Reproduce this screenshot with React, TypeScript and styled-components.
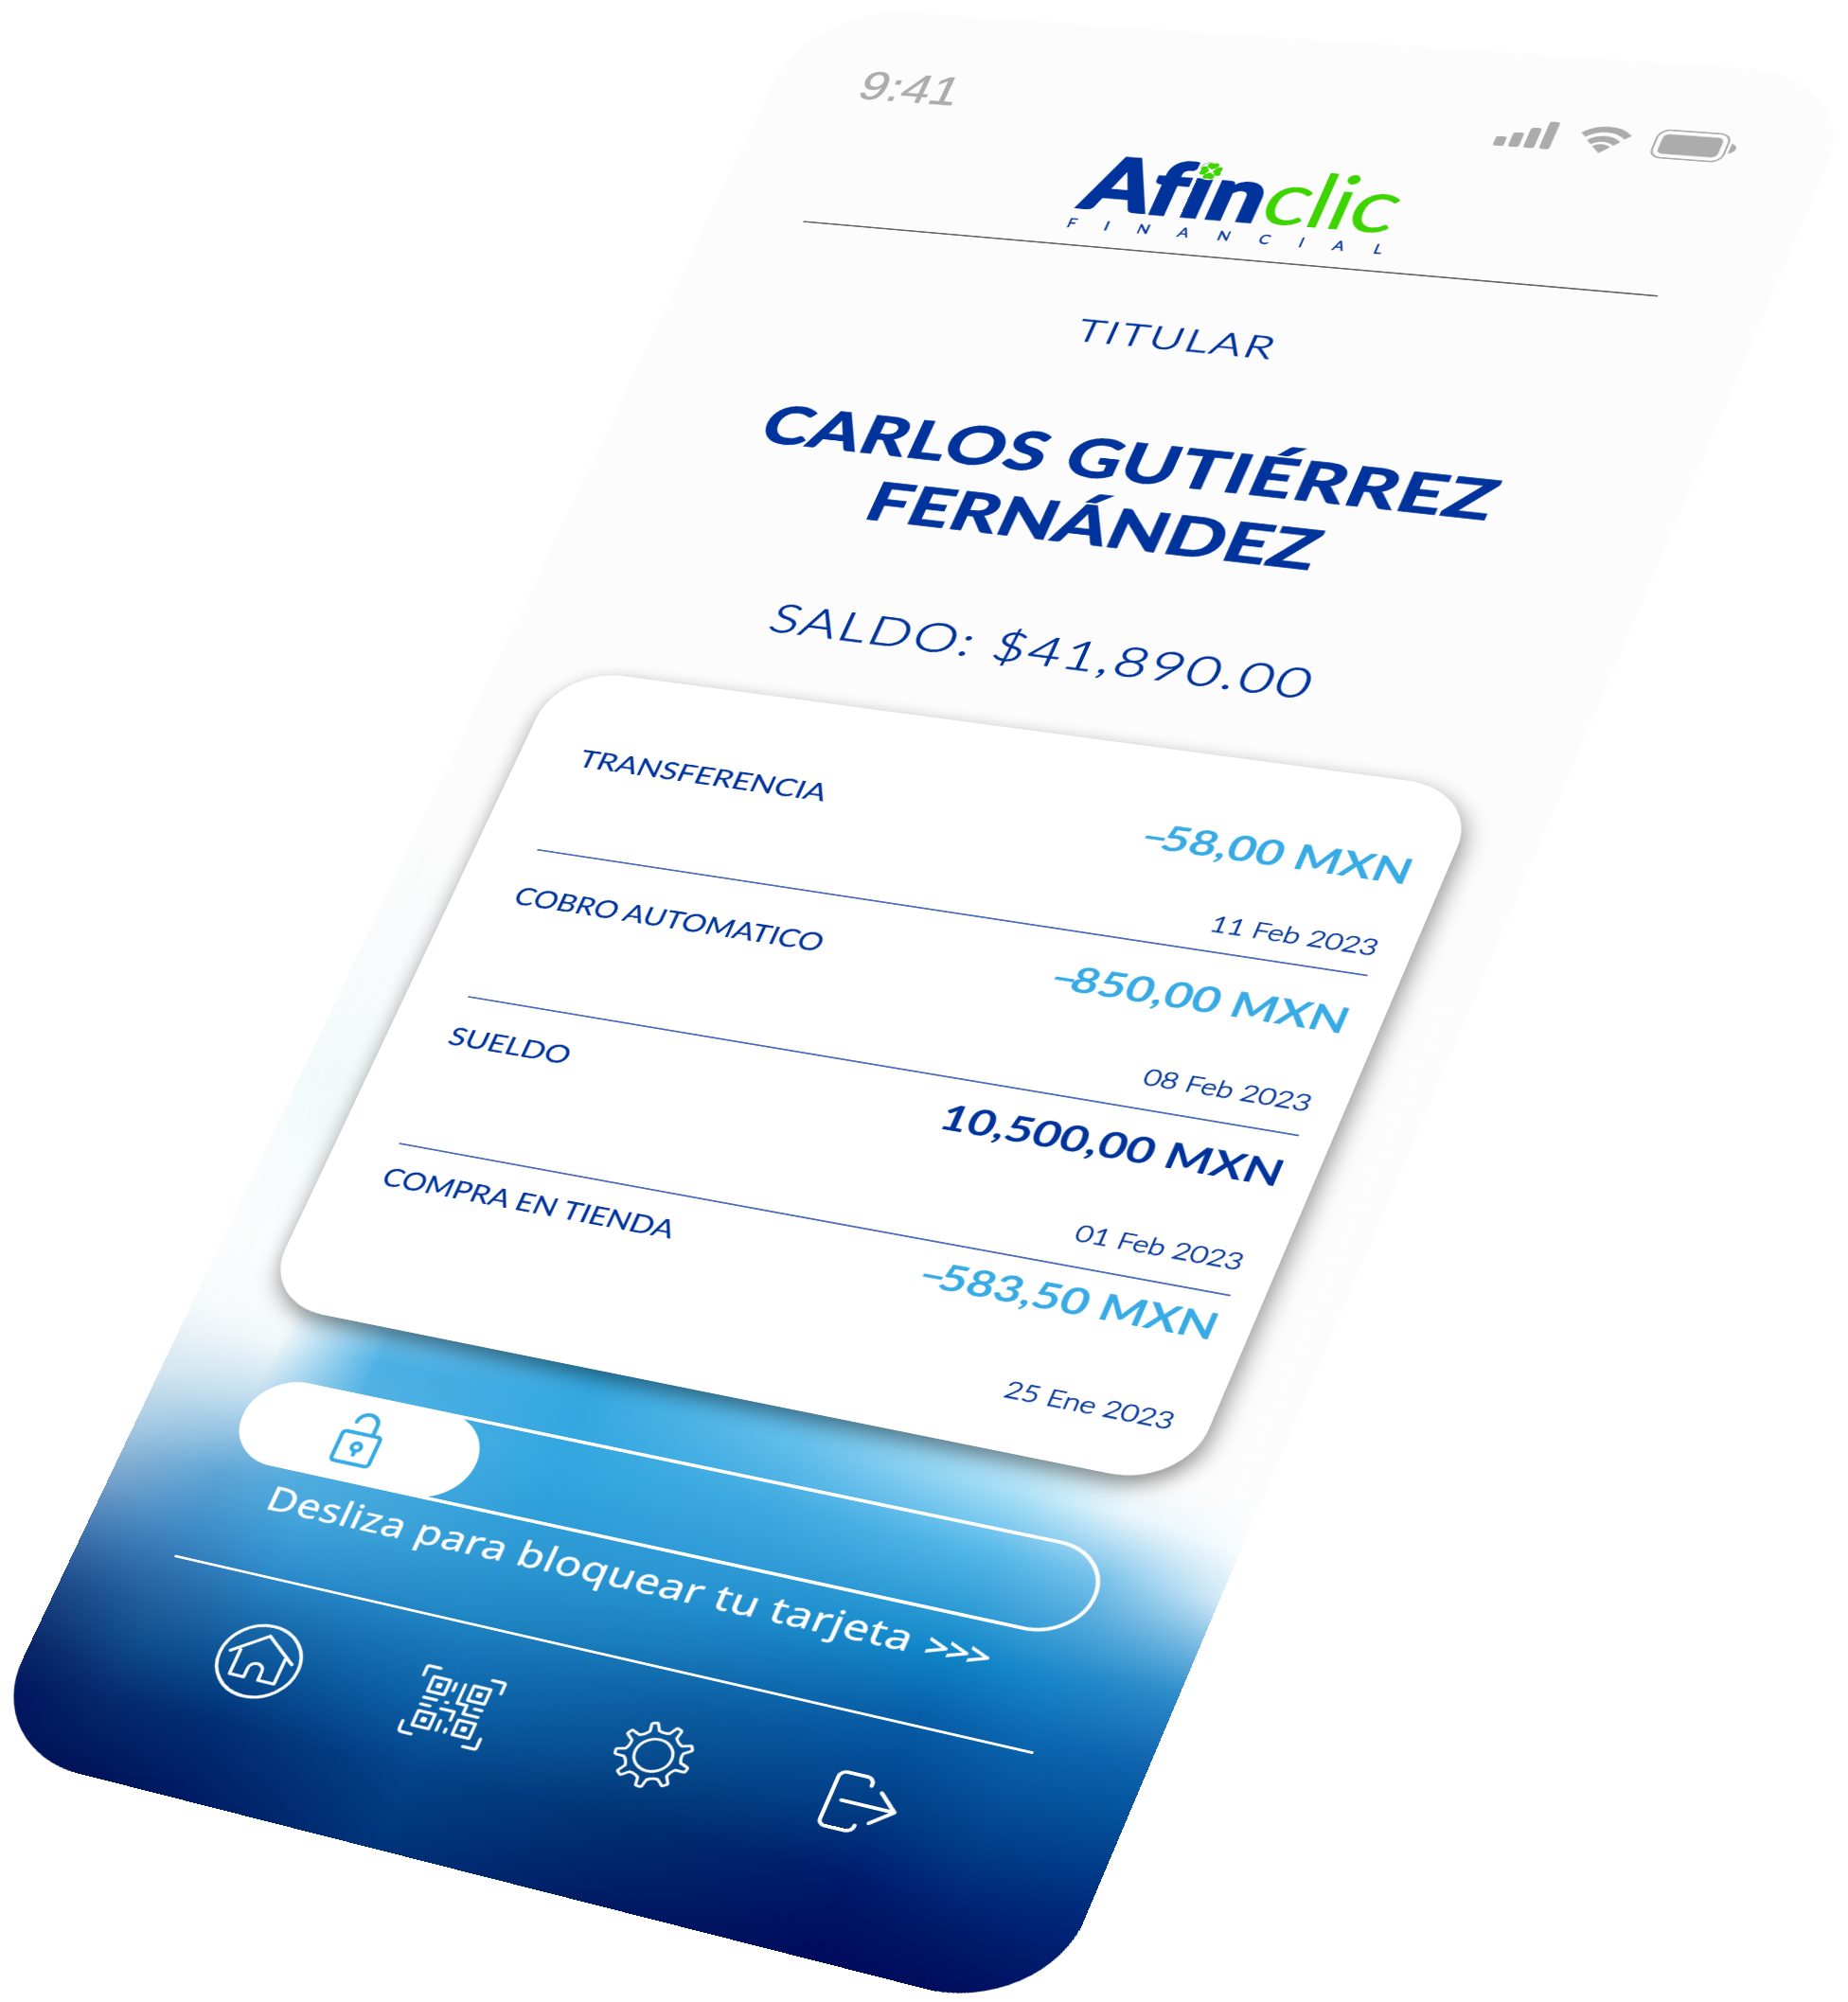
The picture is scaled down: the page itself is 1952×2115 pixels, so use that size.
import React from 'react';
import styled, { createGlobalStyle } from 'styled-components';

const GlobalStyle = createGlobalStyle`
  html, body { margin: 0; padding: 0; background: #ffffff; }
  *, *::before, *::after { box-sizing: border-box; }
`;

/* ---------- perspective ---------- */

const SCREEN_W = 1125;
const SCREEN_H = 2436;

type Point = [number, number];

/** Builds the matrix3d that carries a w x h box onto four corners (TL, TR, BR, BL). */
function quadTransform(w: number, h: number, [p0, p1, p2, p3]: Point[]): string {
  const dx1 = p1[0] - p2[0];
  const dy1 = p1[1] - p2[1];
  const dx2 = p3[0] - p2[0];
  const dy2 = p3[1] - p2[1];
  const sx = p0[0] - p1[0] + p2[0] - p3[0];
  const sy = p0[1] - p1[1] + p2[1] - p3[1];
  const det = dx1 * dy2 - dx2 * dy1;
  const g = (sx * dy2 - dx2 * sy) / det;
  const k = (dx1 * sy - sx * dy1) / det;
  const a = p1[0] - p0[0] + g * p1[0];
  const b = p3[0] - p0[0] + k * p3[0];
  const d = p1[1] - p0[1] + g * p1[1];
  const e = p3[1] - p0[1] + k * p3[1];
  const m = [a / w, d / w, 0, g / w, b / h, e / h, 0, k / h, 0, 0, 1, 0, p0[0], p0[1], 0, 1];
  return `matrix3d(${m.map((n) => n.toFixed(10)).join(',')})`;
}

const tilt = quadTransform(SCREEN_W, SCREEN_H, [
  [854.6, 6.6],
  [1969.5, 80.7],
  [1101.2, 2132.6],
  [-21, 1847.2],
]);

/* ---------- colours ---------- */

const navy = '#00349c';
const sky = '#38abe5';
const lime = '#3dd400';
const grey = '#acacac';
const sans = "Lato, 'Noto Sans', sans-serif";

/* ---------- shell ---------- */

const Stage = styled.main`
  display: flex;
  align-items: flex-start;
  width: 1952px;
  height: 2115px;
  overflow: hidden;
  background: #ffffff;
`;

const Phone = styled.section`
  display: grid;
  flex: none;
  width: ${SCREEN_W}px;
  height: ${SCREEN_H}px;
  border-radius: 115px;
  overflow: hidden;
  background: #fcfcfc;
  transform-origin: 0 0;
  transform: ${tilt};
  font-family: ${sans};
  color: ${navy};
`;

const Backdrop = styled.div`
  grid-area: 1 / 1;
  display: grid;
  clip-path: inset(50% 0 0 0);
`;

const Wash = styled.div<{ $from: number; $to: number; $stops: string }>`
  grid-area: 1 / 1;
  background: linear-gradient(to bottom, ${(p) => p.$stops});
  mask-image: ${(p) =>
    p.$to === 0
      ? 'none'
      : `linear-gradient(to right, transparent ${p.$from}%, #000 ${p.$to}%)`};
`;

const Content = styled.div`
  grid-area: 1 / 1;
  display: flex;
  flex-direction: column;
  position: relative;
  padding-top: 79px;
`;

/* ---------- header ---------- */

const StatusBar = styled.div`
  display: flex;
  align-items: center;
  justify-content: space-between;
  height: 60px;
  padding: 0 92px 0 101px;
  color: ${grey};
`;

const Clock = styled.span`
  font-family: 'Liberation Sans', Arial, sans-serif;
  font-size: 57px;
  line-height: 60px;
  letter-spacing: 0.3px;
  -webkit-text-stroke: 0.7px ${grey};
`;

const StatusIcons = styled.div`
  display: flex;
  align-items: center;
  gap: 24px;
  svg { display: block; }
`;

const Brand = styled.div`
  display: flex;
  flex-direction: column;
  align-items: center;
  margin-top: 30px;
`;

const Wordmark = styled.div`
  position: relative;
  font-size: 102px;
  line-height: 101px;
  font-feature-settings: 'liga' 0;
  white-space: nowrap;
`;

const BrandStrong = styled.span`
  font-weight: 900;
  letter-spacing: 0.5px;
  color: ${navy};
  -webkit-text-stroke: 3px ${navy};
`;

const BrandLight = styled.span`
  font-weight: 400;
  letter-spacing: -2px;
  color: ${lime};
`;

const Clover = styled.svg`
  position: absolute;
  left: 110px;
  top: 11px;
`;

const Tagline = styled.div`
  margin: 2px -31px 0 0;
  font-size: 17px;
  line-height: 17px;
  letter-spacing: 31px;
  -webkit-text-stroke: 0.4px ${navy};
`;

const Rule = styled.hr<{ $tone: string; $weight: number; $gap: number }>`
  width: 910px;
  height: ${(p) => p.$weight}px;
  margin: ${(p) => p.$gap}px auto 0;
  border: 0;
  flex: none;
  background: ${(p) => p.$tone};
`;

/* ---------- holder ---------- */

const Caption = styled.div`
  margin-top: 93px;
  font-size: 42px;
  line-height: 41px;
  font-weight: 300;
  letter-spacing: 2.8px;
  text-align: center;
  transform: scaleX(1.15);
  -webkit-text-stroke: 1.1px ${navy};
`;

const Holder = styled.h1`
  display: flex;
  flex-direction: column;
  align-items: center;
  margin: 104px 6px 0 0;
  font-size: 72px;
  line-height: 88.5px;
  font-weight: 700;
  transform: scaleX(1.1);
  -webkit-text-stroke: 1.6px ${navy};
`;

const HolderLine = styled.span<{ $tracking: number }>`
  letter-spacing: ${(p) => p.$tracking}px;
`;

const Balance = styled.div`
  margin-top: 101px;
  font-size: 53px;
  line-height: 53px;
  font-weight: 300;
  letter-spacing: 2.7px;
  text-align: center;
  transform: scaleX(1.12);
  -webkit-text-stroke: 1px ${navy};
`;

/* ---------- movements ---------- */

const Card = styled.ul`
  list-style: none;
  flex: none;
  width: 979px;
  height: 872px;
  margin: 79px 0 0 72px;
  padding: 88px 32px 0 68px;
  border-radius: 72px;
  background: #ffffff;
  box-shadow: 4px 9px 24px rgba(0, 0, 0, 0.45);
`;

const Movement = styled.li<{ $above: number }>`
  display: flex;
  flex-direction: column;
  padding-top: ${(p) => p.$above}px;
`;

const MovementHead = styled.div`
  display: flex;
  align-items: baseline;
  justify-content: space-between;
  height: 44px;
`;

const Label = styled.span<{ $stretch: number }>`
  font-size: 32px;
  line-height: 32px;
  transform: scaleX(${(p) => p.$stretch});
  transform-origin: left;
  -webkit-text-stroke: 0.2px ${navy};
`;

const Amount = styled.span<{ $credit: boolean }>`
  font-size: 44px;
  line-height: 44px;
  font-weight: 700;
  color: ${(p) => (p.$credit ? navy : sky)};
  transform: scaleX(1.09);
  transform-origin: right;
`;

const Minus = styled.span`
  margin-right: -6px;
`;

const When = styled.time<{ $above: number }>`
  align-self: flex-end;
  margin: ${(p) => p.$above}px 2px 0 0;
  font-size: 27.5px;
  line-height: 30px;
  font-weight: 300;
  transform: scaleX(1.07);
  transform-origin: right;
  -webkit-text-stroke: 0.8px ${navy};
`;

const Divider = styled.div<{ $above: number }>`
  height: 2px;
  margin-top: ${(p) => p.$above}px;
  background: #4a6cbc;
`;

/* ---------- lock slider ---------- */

const Track = styled.div`
  flex: none;
  width: 905px;
  height: 108px;
  margin: 86px auto 0;
  border: 4px solid #ffffff;
  border-radius: 54px;
`;

const Knob = styled.div`
  display: flex;
  align-items: center;
  justify-content: center;
  width: 262px;
  height: 108px;
  margin: -4px;
  padding: 0 0 3px 4px;
  border-radius: 54px;
  background: #ffffff;
`;

const Hint = styled.div`
  display: flex;
  align-items: baseline;
  align-self: flex-start;
  margin: 16px 0 0 177px;
  font-family: 'Noto Sans', sans-serif;
  font-size: 41px;
  line-height: 41px;
  letter-spacing: 0.6px;
  white-space: pre;
  color: #ffffff;
  transform: scaleX(1.1);
  transform-origin: left;
  -webkit-text-stroke: 0.5px #ffffff;
`;

const Chevrons = styled.span`
  margin-left: 2px;
  font-size: 35px;
  letter-spacing: -1.2px;
  -webkit-text-stroke: 1.3px #ffffff;
`;

/* ---------- navigation ---------- */

const Nav = styled.nav`
  display: grid;
  grid-template-columns: repeat(4, 213.4px);
  justify-items: center;
  margin: 50px 0 0 138px;
  svg { display: block; overflow: visible; }
`;

/* ---------- icons ---------- */

const SignalIcon = () => (
  <svg width="58" height="40" viewBox="0 0 58 40" fill="currentColor">
    <rect x="0" y="26" width="11" height="13" rx="2" />
    <rect x="15.5" y="19" width="11" height="20" rx="3" />
    <rect x="31" y="11" width="11" height="28" rx="3" />
    <rect x="47" y="1" width="10.500" height="38" rx="3" />
  </svg>
);

const WifiIcon = () => (
  <svg width="51" height="40" viewBox="0 0 51 40" fill="none" stroke="currentColor" strokeWidth="8">
    <path d="M3 15.500A32 32 0 0 1 48 15.500" />
    <path d="M11.500 25A20 20 0 0 1 39.500 25" />
    <path d="M25.500 39L16.500 30A13 13 0 0 1 34.500 30Z" fill="currentColor" stroke="none" />
  </svg>
);

const BatteryIcon = () => (
  <svg width="82" height="40" viewBox="0 0 82 40" fill="currentColor">
    <rect x="1" y="1" width="71" height="38" rx="11" fill="none" stroke="currentColor" strokeWidth="2" />
    <rect x="6.500" y="6.500" width="60" height="27" rx="6" />
    <path d="M75.500 13c8 3 8 11 0 14z" />
  </svg>
);

const LockIcon = () => (
  <svg width="52" height="76" viewBox="-26 -38 52 76" fill="none" stroke={sky} strokeWidth="4.400" strokeLinecap="round" strokeLinejoin="round">
    <rect x="-21" y="-6" width="42" height="38" rx="4" />
    <path d="M11.500 -6V-19A11.500 11.500 0 0 0 -11.500 -19" />
    <circle cx="0" cy="11" r="5" />
    <path d="M0 16V21" />
  </svg>
);

const HomeIcon = () => (
  <svg width="96" height="96" viewBox="-48 -48 96 96" fill="none" stroke="#ffffff" strokeWidth="3.600">
    <circle r="44" />
    <path d="M-34 -5L0 -32L35 -5" strokeLinecap="round" />
    <path d="M-24 -10V22H-8V11A8 8 0 0 1 8 11V22H26V-10" strokeLinejoin="round" />
  </svg>
);

const finders: Point[] = [[-22, -21], [21.500, -21], [-22, 21.500], [21.500, 21.500]];

const QrIcon = () => (
  <svg width="96" height="96" viewBox="-48 -48 96 96" fill="none" stroke="#ffffff" strokeWidth="3.400" strokeLinecap="round" strokeLinejoin="round">
    <path d="M-42 -29V-39Q-42 -41 -40 -41H-28M28 -41H40Q42 -41 42 -39V-28M42 28V39Q42 41 40 41H28M-28 41H-38Q-42 41 -42 37V28" />
    {finders.map(([x, y]) => (
      <g key={`${x}:${y}`}>
        <rect x={x - 9} y={y - 9} width="18" height="18" />
        <rect x={x - 1.500} y={y - 1.500} width="3" height="3" fill="#ffffff" />
      </g>
    ))}
    <path d="M-6 -28V-19M3.500 -29V-6H14V4.500H30M23 -4H31M-32 -4H-18M-32 4.500H-22M-8 -4H-6M-10 4.500H4.500V15M-5 18V30M4 26V30" />
  </svg>
);

function gearPath(teeth: number, outer: number, root: number, start: number): string {
  const at = (r: number, deg: number) => {
    const t = ((deg - 90) * Math.PI) / 180;
    return `${(r * Math.cos(t)).toFixed(2)} ${(r * Math.sin(t)).toFixed(2)}`;
  };
  const step = 360 / teeth;
  let d = '';
  for (let i = 0; i < teeth; i += 1) {
    const c = start + i * step;
    d += `${i === 0 ? 'M' : 'L'}${at(root + 1, c - 9)}`;
    d += `L${at(outer - 1, c - 5)}Q${at(outer, c - 4.500)} ${at(outer, c - 3)}L${at(outer, c + 3)}`;
    d += `Q${at(outer, c + 4.500)} ${at(outer - 1, c + 5)}L${at(root + 1, c + 9)}`;
    d += `Q${at(root - 1.500, c + step / 2)} ${at(root + 1, c + step - 9)}`;
  }
  return `${d}Z`;
}

const GearIcon = () => (
  <svg width="96" height="96" viewBox="-49 -48 96 96" fill="none" stroke="#ffffff" strokeWidth="3" strokeLinejoin="round">
    <path d={gearPath(9, 38, 28, 22)} />
    <circle r="19" />
  </svg>
);

const ExitIcon = () => (
  <svg width="96" height="96" viewBox="-47 -48 96 96" fill="none" stroke="#ffffff" strokeWidth="4" strokeLinecap="round" strokeLinejoin="round">
    <path d="M2 -23V-25A7 7 0 0 0 -5 -32H-25A7 7 0 0 0 -32 -25V26A7 7 0 0 0 -25 32H-5A7 7 0 0 0 2 25V24" />
    <path d="M-20 0H33M14 -18L33 0L14 18" />
  </svg>
);

/* ---------- data ---------- */

const washes = [
  { from: 0, to: 0, stops: '#fcfcfc 50%, #f4fafb 63%, #fbfdfd 72%, #f6fafc 76%, #d6e7f1 79.500%, #a9cce3 82.500%, #6f9cc8 86%, #3f74ae 88.500%, #1f4c8c 91%, #0a2768 94.500%, #021560 97%, #001358 100%' },
  { from: 0, to: 10, stops: '#fcfcfc 50%, #f0f8fa 65%, #fafdfd 73%, #f2f8fa 77%, #c0ddee 80%, #5fa6d6 84%, #3f8cc8 87%, #2a6aa8 90%, #114f8f 93%, #062b6f 96%, #001358 100%' },
  { from: 10, to: 20, stops: '#fcfcfc 50%, #fcfcfc 70%, #4db0e4 77%, #58b3e4 80%, #45a8dd 85%, #2f8fce 88%, #1f75b5 90%, #0a5195 93%, #022e75 96%, #001a62 100%' },
  { from: 20, to: 40, stops: '#fcfcfc 50%, #38a8e0 72%, #33a7e0 80%, #2d98d3 85%, #2088c4 88%, #1775b8 90%, #0b5fa5 93%, #05448a 96%, #003479 100%' },
  { from: 40, to: 60, stops: '#fcfcfc 50%, #60bdea 77%, #3fa9e0 80%, #2490cf 85%, #1574b5 88%, #0d5fa3 90%, #064a8c 93%, #013072 96%, #001b64 100%' },
  { from: 60, to: 80, stops: '#fcfcfc 50%, #c4e9f8 75%, #a9dff6 77%, #55b8e9 80%, #0f85c6 85%, #085fa8 88%, #04509a 90%, #013a82 93%, #001a6c 96%, #000b5c 100%' },
  { from: 80, to: 90, stops: '#fcfcfc 50%, #fcfcfc 75%, #e8f5fb 77%, #79c2ea 80%, #1b87c9 85%, #0b68b0 88%, #02408a 93%, #001c6c 97%, #000d5c 100%' },
  { from: 90, to: 100, stops: '#fcfcfc 50%, #fcfcfc 75%, #f8fcfe 77.500%, #d0e8f6 80%, #6db3df 82.500%, #2f8cc9 84.500%, #0f62ad 88%, #035299 90.500%, #00297a 95%, #001060 100%' },
];

const movements = [
  { label: 'TRANSFERENCIA', stretch: 1.085, sign: '–', amount: '58,00 MXN', date: '11 Feb 2023', above: 0, dateGap: 60.5, lineGap: 19.5 },
  { label: 'COBRO AUTOMATICO', stretch: 1.03, sign: '–', amount: '850,00 MXN', date: '08 Feb 2023', above: 33.5, dateGap: 68.5, lineGap: 24 },
  { label: 'SUELDO', stretch: 1.08, sign: '', amount: '10,500,00 MXN', date: '01 Feb 2023', above: 23.5, dateGap: 74.5, lineGap: 24.5 },
  { label: 'COMPRA EN TIENDA', stretch: 1.04, sign: '–', amount: '583,50 MXN', date: '25 Ene 2023', above: 15.5, dateGap: 79.5, lineGap: 0 },
];

/* ---------- app ---------- */

export default function App() {
  return (
    <>
      <GlobalStyle />
      <Stage>
        <Phone>
          <Backdrop>
            {washes.map((w) => (
              <Wash key={w.from + w.to} $from={w.from} $to={w.to} $stops={w.stops} />
            ))}
          </Backdrop>
          <Content>
            <StatusBar>
              <Clock>9:41</Clock>
              <StatusIcons>
                <SignalIcon />
                <WifiIcon />
                <BatteryIcon />
              </StatusIcons>
            </StatusBar>
            <Brand>
              <Wordmark>
                <BrandStrong>Afin</BrandStrong>
                <BrandLight>clic</BrandLight>
                <Clover width="26" height="26" viewBox="-13 -13 26 26">
                  <circle r="13" fill="#fcfcfc" />
                  <g fill={lime}>
                    {[0, 90, 180, 270].map((r) => (
                      <path key={r} transform={`rotate(${r})`} d="M0 -2L-5.500 -5.500Q-7 -11.500 -3 -11.500L0 -10.500L3 -11.500Q7 -11.500 5.500 -5.500Z" />
                    ))}
                  </g>
                </Clover>
              </Wordmark>
              <Tagline>FINANCIAL</Tagline>
            </Brand>
            <Rule $tone="#666666" $weight={2.5} $gap={20.5} />
            <Caption>TITULAR</Caption>
            <Holder>
              <HolderLine $tracking={1.5}>CARLOS GUTIÉRREZ</HolderLine>
              <HolderLine $tracking={0.6}>FERNÁNDEZ</HolderLine>
            </Holder>
            <Balance>SALDO: $41,890.00</Balance>
            <Card>
              {movements.map((m, i) => (
                <Movement key={m.label} $above={m.above}>
                  <MovementHead>
                    <Label $stretch={m.stretch}>{m.label}</Label>
                    <Amount $credit={m.sign === ''}>
                      {m.sign && <Minus>{m.sign}</Minus>}
                      {m.amount}
                    </Amount>
                  </MovementHead>
                  <When $above={m.dateGap}>{m.date}</When>
                  {i < movements.length - 1 && <Divider $above={m.lineGap} />}
                </Movement>
              ))}
            </Card>
            <Track>
              <Knob>
                <LockIcon />
              </Knob>
            </Track>
            <Hint>
              {'Desliza para bloquear tu tarjeta '}
              <Chevrons>&gt;&gt;&gt;</Chevrons>
            </Hint>
            <Rule $tone="#ffffff" $weight={3} $gap={71} />
            <Nav>
              <HomeIcon />
              <QrIcon />
              <GearIcon />
              <ExitIcon />
            </Nav>
          </Content>
        </Phone>
      </Stage>
    </>
  );
}
